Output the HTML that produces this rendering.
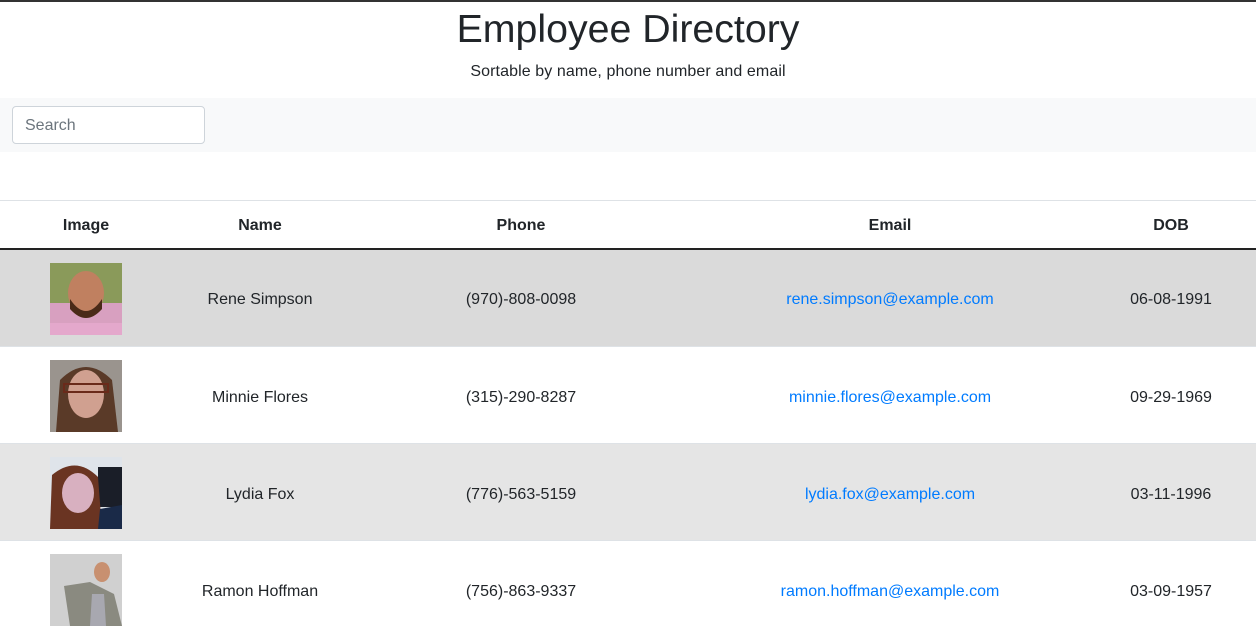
<!DOCTYPE html>
<html><head><meta charset="utf-8"><style>
*{box-sizing:border-box;margin:0;padding:0}
body{width:1256px;height:637px;overflow:hidden;background:#fff;font-family:"Liberation Sans",Arial,sans-serif;color:#212529;border-top:2px solid #333}
h1{font-weight:400;font-size:39.3px;text-align:center;line-height:48px;margin-top:3px;height:48px}
.sub{text-align:center;font-size:16px;line-height:24px;margin-top:7px;letter-spacing:0.1px}
.bar{position:absolute;top:98px;left:0;width:1256px;height:54px;background:#f8f9fa}
.inp{position:absolute;left:12px;top:8px;width:193px;height:38px;border:1px solid #ced4da;border-radius:4px;background:#fff;font-size:16px;color:#6c757d;padding:9px 12px;line-height:20px}
table{position:absolute;top:200px;left:0;width:1256px;border-collapse:collapse;font-size:16px}
th{height:48px;padding-top:4px;border-top:1px solid #dee2e6;border-bottom:2px solid #222;font-weight:700;text-align:center}
td{height:97px;padding-top:5px;text-align:center;border-top:1px solid #dee2e6;vertical-align:middle}
td:first-child{padding-top:2px}
tr.f td{height:98px}
tr.f td:first-child{padding-top:3px}
a{color:#007bff;text-decoration:none}
.r1{background:#dadada}.r3{background:#e5e5e5}
.img{width:72px;height:72px;margin:0 auto;display:block}
</style></head><body>
<h1>Employee Directory</h1>
<div class="sub">Sortable by name, phone number and email</div>
<div class="bar"><div class="inp">Search</div></div>
<table>
<colgroup><col style="width:172px"><col style="width:176px"><col style="width:346px"><col style="width:392px"><col style="width:170px"></colgroup>
<tr><th>Image</th><th>Name</th><th>Phone</th><th>Email</th><th>DOB</th></tr>
<tr class="r1 f"><td><svg class="img" viewBox="0 0 72 72"><rect width="72" height="72" fill="#8a9a5a"/><rect y="40" width="72" height="32" fill="#d8a0c0"/><ellipse cx="36" cy="30" rx="18" ry="22" fill="#c08060"/><path d="M20 36 Q36 60 52 36 L52 46 Q36 64 20 46Z" fill="#4a2a18"/><rect y="60" width="72" height="12" fill="#e4a8cc"/></svg></td><td>Rene Simpson</td><td>(970)-808-0098</td><td><a>rene.simpson@example.com</a></td><td>06-08-1991</td></tr>
<tr><td><svg class="img" viewBox="0 0 72 72"><rect width="72" height="72" fill="#9a948e"/><path d="M6 72 L10 20 Q36 -6 62 20 L68 72Z" fill="#5a3a28"/><ellipse cx="36" cy="34" rx="18" ry="24" fill="#d0a090"/><rect x="14" y="24" width="44" height="8" fill="none" stroke="#6a2a1a" stroke-width="2"/></svg></td><td>Minnie Flores</td><td>(315)-290-8287</td><td><a>minnie.flores@example.com</a></td><td>09-29-1969</td></tr>
<tr class="r3"><td><svg class="img" viewBox="0 0 72 72"><rect width="72" height="72" fill="#dfe4ea"/><rect x="48" y="10" width="24" height="40" fill="#1a1e28"/><path d="M0 72 L2 18 Q26 -2 48 20 L52 72Z" fill="#6a3422"/><ellipse cx="28" cy="36" rx="16" ry="20" fill="#d8b0c0"/><path d="M50 52 L72 48 L72 72 L48 72Z" fill="#1a2a48"/></svg></td><td>Lydia Fox</td><td>(776)-563-5159</td><td><a>lydia.fox@example.com</a></td><td>03-11-1996</td></tr>
<tr><td><svg class="img" viewBox="0 0 72 72"><rect width="72" height="72" fill="#d0d0d0"/><path d="M14 32 L40 28 L64 40 L72 72 L20 72Z" fill="#8a8a80"/><ellipse cx="52" cy="18" rx="8" ry="10" fill="#c89070"/><path d="M42 40 L54 40 L56 72 L40 72Z" fill="#a8a8b0"/></svg></td><td>Ramon Hoffman</td><td>(756)-863-9337</td><td><a>ramon.hoffman@example.com</a></td><td>03-09-1957</td></tr>
</table>
</body></html>
